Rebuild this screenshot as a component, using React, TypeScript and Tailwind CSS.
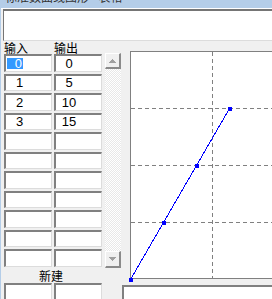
import React from "react";

const ROWS: [string, string][] = [
  ["0", "0"],
  ["1", "5"],
  ["2", "10"],
  ["3", "15"],
  ["", ""],
  ["", ""],
  ["", ""],
  ["", ""],
  ["", ""],
  ["", ""],
  ["", ""],
];

function Cell({ text, selected, col }: { text: string; selected?: boolean; col: number }) {
  return (
    <div className="flex-none w-[48px] h-full bg-white border-t-2 border-l-2 border-t-[#808080] border-l-[#808080] border-b border-r border-b-[#dcdcdc] border-r-[#dcdcdc] flex flex-row items-center">
      {selected ? (
        <div className="flex-none ml-[1px] w-[16px] h-[11px] bg-[#3399ff] text-white text-right pr-[1px] text-[13px] leading-[11px]">
          {text}
        </div>
      ) : (
        <div
          className={`flex-none ${col === 0 ? "w-[27px]" : "w-[26px]"} flex flex-row justify-center text-[13px] leading-[13px] text-black`}
        >
          {text}
        </div>
      )}
    </div>
  );
}

function Arrow({ up }: { up?: boolean }) {
  return (
    <svg width="7" height="4" viewBox="0 0 7 4" shapeRendering="crispEdges">
      {up ? (
        <polygon points="3.5,0 7,4 0,4" fill="#a0a0a0" />
      ) : (
        <polygon points="0,0 7,0 3.5,4" fill="#a0a0a0" />
      )}
    </svg>
  );
}

function ScrollButton({ up, h }: { up?: boolean; h: string }) {
  return (
    <div
      className={`${h} w-[16px] bg-[#f0f0f0] border-t border-l border-t-white border-l-white border-r-2 border-b-2 border-r-[#8a8a8a] border-b-[#8a8a8a] flex items-center justify-center`}
    >
      <Arrow up={up} />
    </div>
  );
}

export default function App() {
  const pts: [number, number][] = [
    [130.5, 279.5],
    [163.5, 222.5],
    [196.5, 165.5],
    [229.5, 108.5],
  ];
  return (
    <div className="w-[272px] h-[299px] overflow-hidden bg-[#f0f0f0] border-l border-l-[#b4cde8] flex flex-col font-['Liberation_Sans','Noto_Sans_CJK_SC',sans-serif]">
      {/* title bar */}
      <div className="h-[8px] shrink-0 bg-[#b4cde8] overflow-hidden">
        <div className="-mt-[10px] pl-[4px] text-[12px] leading-[14px] text-[#333] whitespace-nowrap font-['Noto_Sans_CJK_SC',sans-serif]">
          标准数曲线图形 - 表格
        </div>
      </div>
      <div className="h-[1px] shrink-0 bg-white" />
      {/* text box */}
      <div className="ml-[2px] h-[32px] shrink-0 bg-white border-t-2 border-l border-t-[#757575] border-l-[#757575] border-b border-b-[#dcdcdc]" />
      {/* main */}
      <div className="flex flex-row items-start flex-1">
        {/* left group: table + scrollbar */}
        <div className="ml-[3px] flex flex-row items-start">
          <div className="w-[98px] flex flex-col">
            <div className="h-[13px] flex flex-row text-[12px] leading-[13px] text-black font-['Noto_Sans_CJK_SC',sans-serif]">
              <div className="w-[50px]">输入</div>
              <div>输出</div>
            </div>
            <div className="flex flex-col gap-[2px]">
              {ROWS.map((r, i) => (
                <div key={i} className="h-[17.5px] flex flex-row gap-[2px]">
                  <Cell text={r[0]} selected={i === 0} col={0} />
                  <Cell text={r[1]} col={1} />
                </div>
              ))}
            </div>
            <div className="h-[16.5px] flex items-end justify-center pr-[4px] text-[12px] leading-[14px] text-black font-['Noto_Sans_CJK_SC',sans-serif]">
              新建
            </div>
            <div className="h-[17.5px] flex flex-row gap-[2px]">
              <Cell text="" col={0} />
              <Cell text="" col={1} />
            </div>
          </div>
          {/* scrollbar */}
          <div className="ml-[3px] mt-[12px] w-[16px] h-[215px] flex flex-col">
            <ScrollButton up h="h-[16px]" />
            <div className="flex-1 bg-[image:repeating-conic-gradient(#e8e8e8_0%_25%,#ffffff_0%_50%)] bg-[length:2px_2px]" />
            <ScrollButton h="h-[17px]" />
          </div>
        </div>
        {/* right group: chart + bottom box */}
        <div className="ml-[1px] flex-1 flex flex-col">
          <div className="ml-[8px] mt-[10px] h-[228px] bg-white border-t border-l border-b border-[#808080]">
            <svg
              width="141"
              height="226"
              viewBox="131 52 141 226"
              className="block overflow-visible"
              shapeRendering="crispEdges"
            >
              <line x1="212.5" y1="52" x2="212.5" y2="278" stroke="#808080" strokeDasharray="4 3" />
              {[108.5, 165.5, 222.5].map((y) => (
                <line key={y} x1="131" y1={y} x2="272" y2={y} stroke="#808080" strokeDasharray="4 3" />
              ))}
              <polyline
                points={pts.map((p) => p.join(",")).join(" ")}
                fill="none"
                stroke="#0000ff"
                strokeWidth="1"
              />
              {pts.map((p, i) => (
                <rect key={i} x={p[0] - 2} y={p[1] - 2} width="4" height="4" fill="#0000ff" />
              ))}
            </svg>
          </div>
          <div className="mt-[6px] h-[20px] bg-white border-t-2 border-l-2 border-[#808080]" />
        </div>
      </div>
    </div>
  );
}
